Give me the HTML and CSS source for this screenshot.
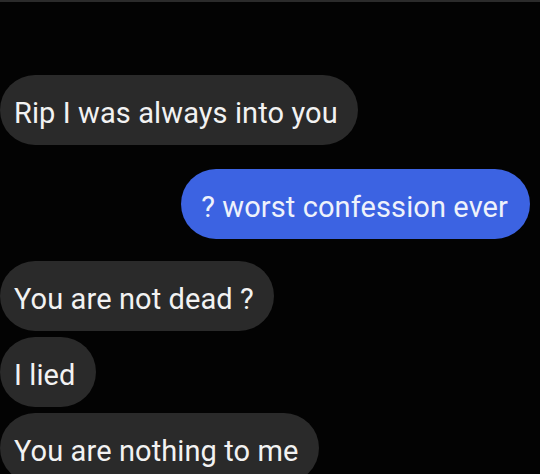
FILE: index.html
```html
<!DOCTYPE html>
<html lang="en">
<head>
    <meta charset="UTF-8">
    <meta name="viewport" content="width=device-width, initial-scale=1.0">
    <title>Chat</title>
    <link rel="stylesheet" href="styles.css">
</head>
<body>

    <div class="chat">
        <div class="msg in first">Rip I was always into you</div>
        <div class="msg out">? worst confession ever</div>
        <div class="msg in">You are not dead ?</div>
        <div class="msg in">I lied</div>
        <div class="msg in">You are nothing to me</div>
    </div>

</body>
</html>
```

FILE: styles.css
```css
body {
    margin: 0;
    background-color: #030303;
    font-family: Roboto, 'Liberation Sans', sans-serif;
    height: 474px;
    overflow: hidden;
}
.chat {
    border-top: 2px solid #2b2b2b;
    display: flex;
    flex-direction: column;
    gap: 6px;
}
.msg {
    box-sizing: border-box;
    height: 70px;
    padding-top: 4px;
    line-height: 68px;
    font-size: 29px;
    letter-spacing: 0.1px;
    border-radius: 35px;
    white-space: nowrap;
}
.in {
    align-self: flex-start;
    background-color: #2a2a2a;
    color: #f2f2f2;
    padding-left: 14px;
    padding-right: 20px;
}
.out {
    align-self: flex-end;
    margin: 18px 10px 16px 0;
    background-color: #3c63e2;
    color: #eef2fb;
    padding-left: 20px;
    padding-right: 22px;
}
.first {
    margin-top: 73px;
}
```
